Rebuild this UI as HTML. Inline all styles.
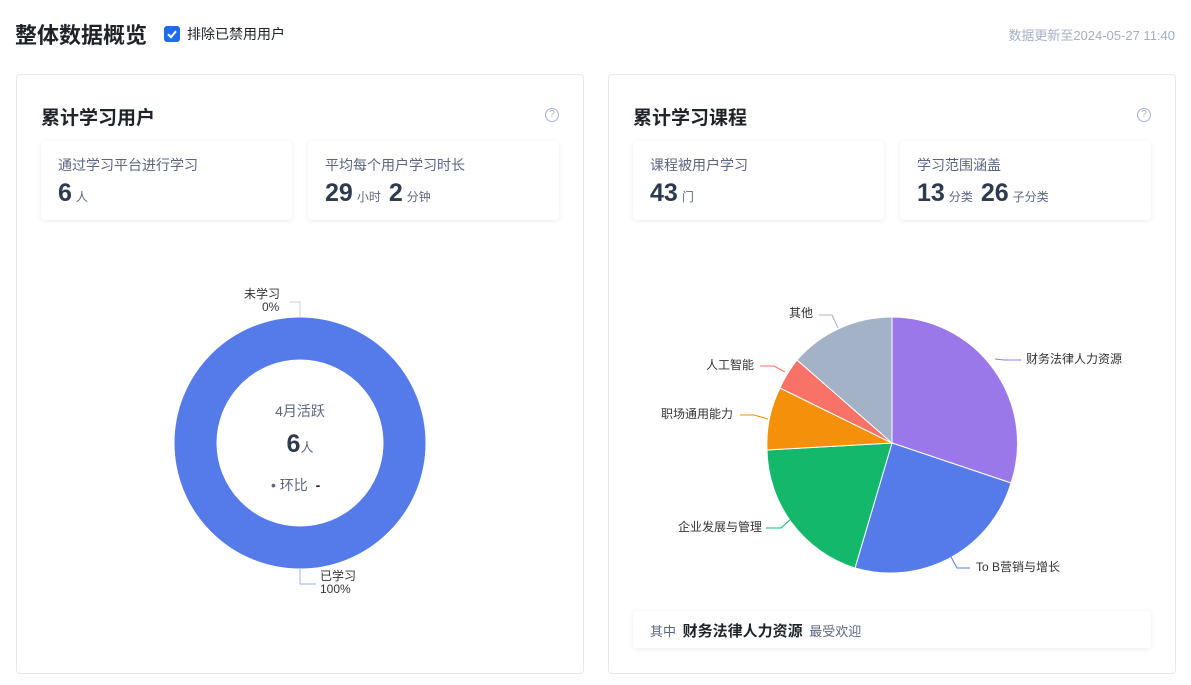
<!DOCTYPE html>
<html><head><meta charset="utf-8"><style>
*{margin:0;padding:0;box-sizing:border-box}
body{width:1191px;height:685px;background:#fff;font-family:"Liberation Sans","Noto Sans CJK SC",sans-serif;position:relative;overflow:hidden;color:#333}
.abs{position:absolute}
.h1{left:15px;top:18px;font-size:22px;font-weight:bold;color:#1f2329}
.cb{left:164px;top:26px;width:16px;height:16px;background:#1e6bf0;border-radius:3px}
.cbl{left:187px;top:24px;font-size:14px;color:#1f2329}
.upd{right:16px;top:25px;font-size:13px;color:#a3b0c6}
.card{border:1px solid #e6e8eb;border-radius:4px;top:74px;height:600px;width:568px}
.t{font-size:19px;font-weight:bold;color:#1f2329;top:103px}
.q{width:14px;height:14px;border:1.3px solid #a8b6cc;border-radius:50%;font-size:10px;color:#a8b6cc;text-align:center;line-height:12px;top:108px}
.st{top:141px;width:251px;height:79px;border-radius:4px;box-shadow:0 1px 6px rgba(0,0,0,.08);background:#fff}
.st .l{position:absolute;left:17px;top:14px;font-size:14px;color:#5a6680}
.st .v{position:absolute;left:17px;top:38px;font-size:25px;font-weight:bold;color:#2e3a4f;white-space:nowrap}
.st .v span{font-size:12px;font-weight:normal;color:#5a6680;margin:0 8px 0 4px}
.lbl{font-size:12px;color:#333;line-height:13px}
</style></head><body>
<div class="abs h1">整体数据概览</div>
<div class="abs cb"><svg width="16" height="16"><path d="M4 8.2l3 3 5-6" stroke="#fff" stroke-width="2" fill="none"/></svg></div>
<div class="abs cbl">排除已禁用用户</div>
<div class="abs upd">数据更新至2024-05-27 11:40</div>

<div class="abs card" style="left:16px"></div>
<div class="abs card" style="left:608px"></div>

<div class="abs t" style="left:41px">累计学习用户</div>
<div class="abs q" style="left:545px">?</div>
<div class="abs t" style="left:633px">累计学习课程</div>
<div class="abs q" style="left:1137px">?</div>

<div class="abs st" style="left:41px"><div class="l">通过学习平台进行学习</div><div class="v">6<span>人</span></div></div>
<div class="abs st" style="left:308px"><div class="l">平均每个用户学习时长</div><div class="v">29<span>小时</span>2<span>分钟</span></div></div>
<div class="abs st" style="left:633px"><div class="l">课程被用户学习</div><div class="v">43<span>门</span></div></div>
<div class="abs st" style="left:900px"><div class="l">学习范围涵盖</div><div class="v">13<span>分类</span>26<span>子分类</span></div></div>

<svg class="abs" style="left:0;top:0" width="1191" height="685">
<circle cx="300" cy="443" r="104.5" fill="none" stroke="#557bea" stroke-width="42"/>
<path d="M300 317V302H290" stroke="#c8d0e0" fill="none"/>
<path d="M300 569V584H316" stroke="#98aef0" fill="none"/>
<g stroke="#fff" stroke-width="1">
<path d="M892 443L892 317A126 126 0 0 1 1011 483Z" fill="#9b78ea"/>
<path d="M892 443L1011 483A126 126 0 0 1 855 568Z" fill="#557bea"/>
<path d="M892 443L855 568A126 126 0 0 1 767 450Z" fill="#14b86a"/>
<path d="M892 443L767 450A126 126 0 0 1 780 388Z" fill="#f5900b"/>
<path d="M892 443L780 388A126 126 0 0 1 797 360Z" fill="#f87268"/>
<path d="M892 443L797 360A126 126 0 0 1 892 317Z" fill="#a4b2c8"/>
</g>
<g fill="none">
<path d="M995 359L1004 360H1021" stroke="#9b78ea"/>
<path d="M950 555L957 568H970" stroke="#557bea"/>
<path d="M792 518L781 528H766" stroke="#14b86a"/>
<path d="M768 419L754 415H740" stroke="#f5900b"/>
<path d="M785 372L774 366H760" stroke="#f87268"/>
<path d="M838 328L832 315H819" stroke="#a4b2c8"/>
</g>
</svg>
<div class="abs lbl" style="left:244px;top:288px">未学习</div>
<div class="abs lbl" style="left:262px;top:301px">0%</div>
<div class="abs lbl" style="left:320px;top:570px">已学习</div>
<div class="abs lbl" style="left:320px;top:583px">100%</div>
<div class="abs" style="left:200px;width:200px;text-align:center;top:401px;font-size:14px;color:#5a6680">4月活跃</div>
<div class="abs" style="left:200px;width:200px;text-align:center;top:430px;font-size:25px;font-weight:bold;color:#2e3a4f">6<span style="font-size:13px;font-weight:normal;color:#5a6680">人</span></div>
<div class="abs" style="left:271px;top:475px;font-size:14px;color:#5a6680">• 环比 &nbsp;<b style="color:#1f2329">-</b></div>

<div class="abs lbl" style="left:1026px;top:353px">财务法律人力资源</div>
<div class="abs lbl" style="left:976px;top:561px">To B营销与增长</div>
<div class="abs lbl" style="left:678px;top:521px">企业发展与管理</div>
<div class="abs lbl" style="left:661px;top:408px">职场通用能力</div>
<div class="abs lbl" style="left:706px;top:359px">人工智能</div>
<div class="abs lbl" style="left:789px;top:307px">其他</div>

<div class="abs" style="left:633px;top:611px;width:518px;height:37px;border-radius:4px;box-shadow:0 1px 6px rgba(0,0,0,.08);background:#fff;padding:9px 17px;font-size:13px;color:#5a6680;white-space:nowrap">其中 <b style="font-size:15px;color:#1f2329;margin:0 3px">财务法律人力资源</b> 最受欢迎</div>
</body></html>
